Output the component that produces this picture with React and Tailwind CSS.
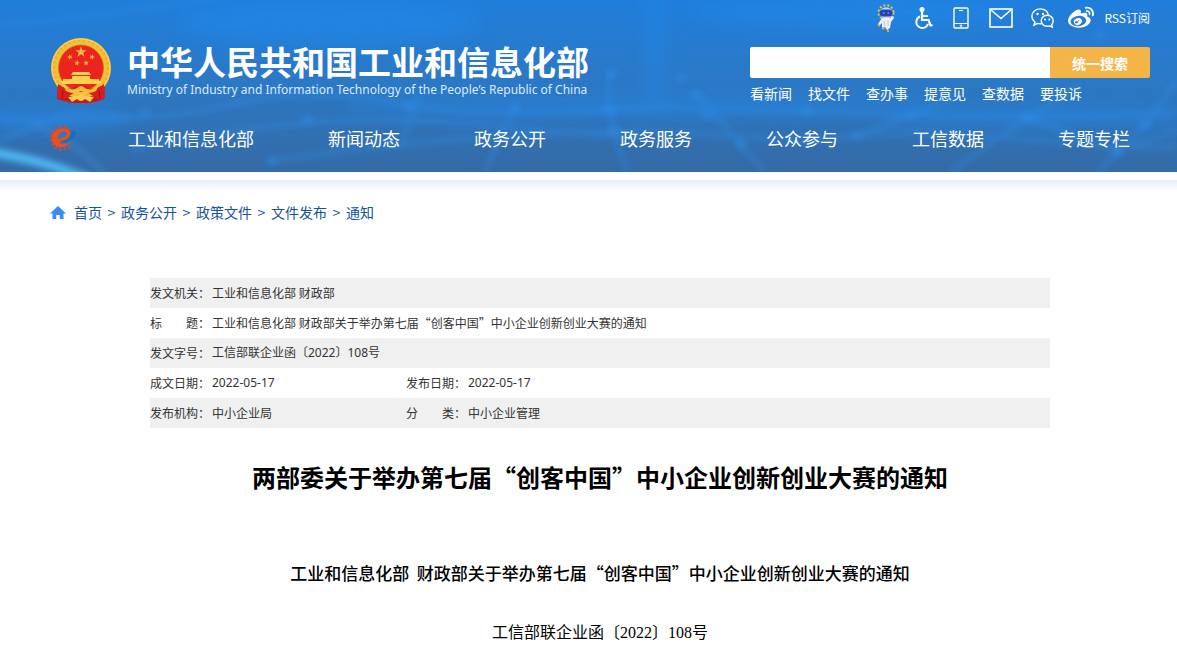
import React, { useState } from 'react';
import { FaWeibo } from 'react-icons/fa';

const quickLinks = ['看新闻', '找文件', '查办事', '提意见', '查数据', '要投诉'];

const navItems = [
  '工业和信息化部',
  '新闻动态',
  '政务公开',
  '政务服务',
  '公众参与',
  '工信数据',
  '专题专栏'
];

const crumbs = ['首页', '政务公开', '政策文件', '文件发布', '通知'];

const glowDots = [
  [145, 112], [308, 119], [409, 106], [515, 107], [612, 73], [609, 109],
  [681, 77], [695, 95], [707, 114], [741, 143], [857, 135], [807, 110],
  [911, 114], [1027, 117], [1118, 151], [1145, 124], [1100, 35], [614, 130], [272, 160]
];

const star = '0,-10 2.4,-3.1 9.5,-3.1 3.8,1.2 5.9,8.1 0,3.9 -5.9,8.1 -3.8,1.2 -9.5,-3.1 -2.4,-3.1';

const smallStars = [
  [20, 19, -20],
  [27, 25, 10],
  [36, 25, -10],
  [42, 19, 20]
];

const HeaderBackdrop = () => (
  <svg
    className="absolute inset-0 h-full w-full"
    viewBox="0 0 1177 171"
    preserveAspectRatio="none"
    aria-hidden="true"
  >
    <defs>
      <filter id="soft" x="-20%" y="-20%" width="140%" height="140%">
        <feGaussianBlur stdDeviation="3" />
      </filter>
      <filter id="wide" x="-50%" y="-50%" width="200%" height="200%">
        <feGaussianBlur stdDeviation="9" />
      </filter>
    </defs>
    <g filter="url(#wide)" fill="#2388ea" opacity="0.6">
      <ellipse cx="330" cy="22" rx="150" ry="22" />
      <ellipse cx="860" cy="12" rx="170" ry="14" />
      <rect x="648" y="0" width="14" height="110" />
      <ellipse cx="640" cy="106" rx="300" ry="8" />
      <ellipse cx="1040" cy="116" rx="160" ry="8" />
      <ellipse cx="40" cy="118" rx="90" ry="10" />
    </g>
    <g filter="url(#soft)" fill="none" stroke="#2f8de6" strokeWidth="4" opacity="0.5">
      <path d="M0 118 C90 122 170 120 240 102 S360 96 420 106 S560 112 640 108 S800 112 910 114 S1100 116 1177 112" />
      <path d="M0 24 C80 20 160 6 230 -4" />
      <path d="M130 150 C230 128 300 118 400 120 S530 132 640 136" />
      <path d="M270 160 C400 142 520 132 620 130 S760 146 857 135 S1080 150 1177 146" />
      <path d="M609 70 C608 110 614 140 628 171" />
      <path d="M400 147 L420 90" />
      <path d="M515 107 L485 171" />
      <path d="M695 90 C720 120 745 150 765 171" />
      <path d="M857 135 L911 114 L960 95" />
      <path d="M950 171 L1027 117 L1080 85" />
      <path d="M1027 117 L1115 150 L1177 130" />
      <path d="M1098 171 L1145 124 L1177 80" />
      <path d="M0 140 L70 112 L140 116" />
    </g>
    <g filter="url(#soft)" fill="#2f90ee" opacity="0.5">
      {glowDots.map(([x, y], index) => (
        <ellipse key={index} cx={x} cy={y} rx="6" ry="4" />
      ))}
    </g>
    <g filter="url(#soft)" fill="none" strokeLinecap="round">
      <path d="M-10 151 C20 156 50 162 88 178" stroke="#4db8f4" strokeWidth="9" />
      <path d="M30 120 C60 136 90 152 110 180" stroke="#3a86cc" strokeWidth="4" opacity="0.7" />
    </g>
  </svg>
);

const NationalEmblem = () => (
  <svg className="h-[65px] w-[62px] shrink-0" viewBox="0 0 62 65" aria-hidden="true">
    <path d="M8 46 L7 61 L14 63 L22 65 H40 L48 63 L54 61 L55 46 Z" fill="#c8161d" />
    <ellipse cx="31" cy="30" rx="30" ry="30" fill="#f4bf35" />
    <ellipse cx="31" cy="30" rx="27" ry="27.5" fill="none" stroke="#e8ad2a" strokeWidth="2" strokeDasharray="2 3" />
    <ellipse cx="31" cy="30" rx="29" ry="29" fill="none" stroke="#fbd75f" strokeWidth="1" />
    <ellipse cx="31" cy="30" rx="22.5" ry="23" fill="#ec2420" stroke="#b97a16" strokeWidth="0.7" />
    <g fill="#f6bb35">
      <polygon points={star} transform="translate(31 14) scale(0.6)" />
      {smallStars.map(([x, y, turn]) => (
        <polygon key={x} points={star} transform={`translate(${x} ${y}) rotate(${turn}) scale(0.3)`} />
      ))}
    </g>
    <g fill="#fbd04a">
      <path d="M23 34 H39 L41 37 H21 Z" />
      <path d="M22 38 H40 V41 H49 V43 H13 V41 H22 Z" />
      <path d="M11 43 H51 L50 46 H12 Z" />
    </g>
    <path d="M8 46 Q16 52 24 50 Q31 44 38 50 Q46 52 54 46 L55 60 Q47 62 43 58 L37 54 H25 L19 58 Q15 62 7 60 Z" fill="#d71f1f" />
    <path d="M13 47 Q22 54 27 50 Q31 46 35 50 Q40 54 49 47 L46 53 Q38 57 31 53 Q24 57 16 53 Z" fill="#f5bf38" />
    <path d="M18 59 L27 58 Q31 54 35 58 L44 59 L40 64 L35 61 Q31 65 27 61 L22 64 Z" fill="#f8cc50" />
    <path d="M13 52 L12 60 M49 52 L50 60" stroke="#9f1013" strokeWidth="1" />
  </svg>
);

const GearLogo = () => (
  <svg className="-ml-0.5 h-[26px] w-[30px]" viewBox="0 0 30 26" aria-hidden="true">
    <path d="M22 4.500 A11.500 11.500 0 1 0 22 21.500" fill="none" stroke="#e2452a" strokeWidth="2.400" strokeDasharray="2.200 2.400" />
    <path
      d="M22.500 9 C22 3 15 2.500 11 4 C6 6 3.500 10 4 14 C4.500 19 8.500 22.500 13.500 22.300 C17.500 22 20.500 20 22.500 17 C18 19.500 13.500 19.500 10.800 17 C15 17 21 15 22.500 9 Z M18.800 8.500 C18 12 14 13.800 9.500 14.200 C9.500 10 13 6.500 16.500 6.500 C18 6.500 18.900 7.200 18.800 8.500 Z"
      fill="#f04e16"
      fillRule="evenodd"
    />
    <path d="M11 15.800 C17 16.500 22.500 13.500 23.500 8 L22 9 L26.500 5 L28.500 9.500 L27 9 C26 15 18 19 11 15.800 Z" fill="#0b72bf" />
  </svg>
);

const RobotIcon = () => (
  <svg className="h-[28px] w-[18px]" viewBox="0 0 18 28" aria-hidden="true">
    <ellipse cx="9" cy="8.5" rx="7.5" ry="7.3" fill="none" stroke="#f3c62d" strokeWidth="2" strokeDasharray="2 2" />
    <ellipse cx="9" cy="9" rx="6.5" ry="5.800" fill="#cbd6f2" />
    <rect x="2.500" y="5.500" width="13" height="7" rx="3.500" fill="#2a3fb4" />
    <path d="M6 9 H7.500 M10.500 9 H12" stroke="#5fa8ff" strokeWidth="1.400" />
    <path d="M5 14 H13 L16 12 L17 14 L14 18 L13 24 L10 26 L8 23 L5 24 L5 19 L2 22 L1 20 Z" fill="#eef2fb" />
    <path d="M7 17 L8 22 M11 16 L11 22" stroke="#bcc8e2" strokeWidth="1" />
    <path d="M1 20 L2.500 22.500 M5 24.500 H7.500 M10 27 H12" stroke="#f0a42b" strokeWidth="1.800" />
  </svg>
);

const WheelchairIcon = () => (
  <svg className="h-[22px] w-[18px]" viewBox="0 0 18 22" fill="none" stroke="white" aria-hidden="true">
    <circle cx="7" cy="2.500" r="2.500" fill="white" stroke="none" />
    <path d="M7 5 V13 H13.500 L15.500 18.500 L17.500 18" strokeWidth="2.200" />
    <path d="M7 9 H13" strokeWidth="1.800" />
    <path d="M5 9.500 A6 6 0 1 0 13 17" strokeWidth="1.900" />
  </svg>
);

const PhoneIcon = () => (
  <svg className="h-[22px] w-4" viewBox="0 0 16 22" fill="none" stroke="white" aria-hidden="true">
    <rect x="1" y="1" width="14" height="20" rx="1" strokeWidth="1.400" />
    <path d="M1 16.500 H15 M6 3.500 H10" strokeWidth="1.200" />
    <circle cx="8" cy="18.700" r="0.800" strokeWidth="1" />
  </svg>
);

const MailIcon = () => (
  <svg className="h-5 w-6" viewBox="0 0 24 20" fill="none" stroke="white" strokeWidth="1.600" aria-hidden="true">
    <rect x="1" y="1" width="22" height="18" />
    <path d="M1.500 1.500 L12 10.500 L22.500 1.500" />
  </svg>
);

const WechatIcon = () => (
  <svg className="h-5 w-[23px]" viewBox="0 0 23 20" fill="none" stroke="white" strokeWidth="1.400" aria-hidden="true">
    <path d="M17.500 7.300 C17 3.500 13.500 0.900 9.300 0.900 C4.600 0.900 0.900 4.200 0.900 8.300 C0.900 10.700 2.100 12.700 4 14 L3 17.200 L6.500 15.400 C7.800 15.800 9 15.800 10.300 15.700" />
    <path d="M16.200 7.300 C12.900 7.300 10.200 9.700 10.200 12.800 C10.200 15.900 12.900 18.300 16.200 18.300 C17.100 18.300 17.800 18.200 18.600 17.900 L21.300 19.200 L20.700 16.700 C21.600 15.700 22.200 14.400 22.200 12.800 C22.200 9.700 19.500 7.300 16.200 7.300 Z" />
    <g fill="white" stroke="none">
      <circle cx="6.500" cy="6" r="1.200" />
      <circle cx="12" cy="6" r="1.200" />
      <circle cx="14" cy="11.500" r="1" />
      <circle cx="18.300" cy="11.500" r="1" />
    </g>
  </svg>
);

const HomeIcon = () => (
  <svg className="h-[13px] w-4" viewBox="0 0 16 13" fill="#3b8bf5" aria-hidden="true">
    <path d="M8 0 L16 7.500 H13.500 V13 H9.800 V9 H6.200 V13 H2.500 V7.500 H0 Z" />
  </svg>
);

const Header = () => {
  const [keyword, setKeyword] = useState('');

  return (
    <header className="relative overflow-hidden bg-linear-to-b from-[#1f7edb] via-[#2c78c4] to-[#346aa5]">
      <HeaderBackdrop />
      <div className="relative pl-[50px] pr-[27px] text-white">
        <div className="flex h-[108px] items-start justify-between">
          <div className="flex items-start gap-[15px] pt-[38px]">
            <NationalEmblem />
            <div>
              <h1 className="whitespace-nowrap text-[33px] font-bold leading-[46px]">中华人民共和国工业和信息化部</h1>
              <p lang="en" className="whitespace-nowrap font-['Noto_Sans',sans-serif] text-xs leading-3 text-blue-100">
                Ministry of Industry and Information Technology of the People’s Republic of China
              </p>
            </div>
          </div>

          <div className="w-[400px] pt-1">
            <div className="flex h-7 items-center justify-end">
              <a href="#robot" aria-label="智能问答" className="mr-5"><RobotIcon /></a>
              <a href="#accessible" aria-label="无障碍" className="mr-5"><WheelchairIcon /></a>
              <a href="#mobile" aria-label="手机版" className="mr-5"><PhoneIcon /></a>
              <a href="#mail" aria-label="邮箱" className="mr-[18px]"><MailIcon /></a>
              <a href="#wechat" aria-label="微信" className="mr-[14px]"><WechatIcon /></a>
              <a href="#weibo" aria-label="微博" className="mr-[10px]"><FaWeibo size={26} /></a>
              <a href="#rss" className="text-xs">RSS订阅</a>
            </div>
            <form className="mt-[15px] flex h-[31px]" onSubmit={(e) => e.preventDefault()}>
              <input
                type="text"
                aria-label="搜索"
                value={keyword}
                onChange={(e) => setKeyword(e.target.value)}
                className="min-w-0 flex-1 rounded-l-xs bg-white px-2 text-sm text-gray-800 outline-none"
              />
              <button type="submit" className="w-[100px] rounded-r-xs bg-[#f3b548] text-sm font-bold">
                统一搜索
              </button>
            </form>
            <div className="mt-1 flex gap-4 text-sm leading-[22px]">
              {quickLinks.map((link) => (
                <a key={link} href="#search">{link}</a>
              ))}
            </div>
          </div>
        </div>

        <nav className="flex h-16 items-center pb-1">
          <a href="#home" aria-label="首页" className="w-[78px]"><GearLogo /></a>
          <div className="flex flex-1 justify-between pr-5 text-lg">
            {navItems.map((item) => (
              <a key={item} href="#nav" className="whitespace-nowrap">{item}</a>
            ))}
          </div>
        </nav>
      </div>
    </header>
  );
};

const Breadcrumb = () => (
  <nav aria-label="面包屑" className="flex items-center pl-[50px] text-sm leading-6 text-[#17539c]">
    <HomeIcon />
    <div className="ml-2 flex">
      {crumbs.map((crumb, index) => (
        <React.Fragment key={crumb}>
          {index > 0 && <span className="w-[19px] text-center">&gt;</span>}
          <a href="#crumb">{crumb}</a>
        </React.Fragment>
      ))}
    </div>
  </nav>
);

const InfoTable = () => (
  <table className="w-full table-fixed text-left text-xs text-[#333]">
    <colgroup>
      <col className="w-[62px]" />
      <col className="w-[194px]" />
      <col className="w-[62px]" />
      <col />
    </colgroup>
    <tbody>
      <tr className="h-[30px] bg-[#f0f0f0]">
        <th scope="row" className="whitespace-nowrap font-normal">发文机关：</th>
        <td colSpan={3}>工业和信息化部 财政部</td>
      </tr>
      <tr className="h-[30px]">
        <th scope="row" className="whitespace-nowrap font-normal">标　　题：</th>
        <td colSpan={3}>工业和信息化部 财政部关于举办第七届“创客中国”中小企业创新创业大赛的通知</td>
      </tr>
      <tr className="h-[30px] bg-[#f0f0f0]">
        <th scope="row" className="whitespace-nowrap font-normal">发文字号：</th>
        <td colSpan={3} className="font-['Noto_Sans','Noto_Sans_CJK_SC',sans-serif]">工信部联企业函〔2022〕108号</td>
      </tr>
      <tr className="h-[30px]">
        <th scope="row" className="whitespace-nowrap font-normal">成文日期：</th>
        <td className="font-['Noto_Sans','Noto_Sans_CJK_SC',sans-serif]">2022-05-17</td>
        <th scope="row" className="whitespace-nowrap font-normal">发布日期：</th>
        <td className="font-['Noto_Sans','Noto_Sans_CJK_SC',sans-serif]">2022-05-17</td>
      </tr>
      <tr className="h-[30px] bg-[#f0f0f0]">
        <th scope="row" className="whitespace-nowrap font-normal">发布机构：</th>
        <td>中小企业局</td>
        <th scope="row" className="whitespace-nowrap font-normal">分　　类：</th>
        <td>中小企业管理</td>
      </tr>
    </tbody>
  </table>
);

const App = () => {
  return (
    <div lang="zh-CN" className="bg-white font-['Noto_Sans_CJK_SC','Noto_Sans',sans-serif]">
      <Header />
      <div className="mt-2 h-3 bg-linear-to-b from-[#e8eff6] to-white" />
      <div className="mt-2">
        <Breadcrumb />
      </div>
      <main className="mt-[54px] pl-[150px] pr-[127px]">
        <InfoTable />
        <h2 className="mt-[31px] text-center text-2xl font-bold leading-9 text-black">
          两部委关于举办第七届“创客中国”中小企业创新创业大赛的通知
        </h2>
        <p className="mt-[62px] text-center text-[17px] font-medium leading-8 text-black">
          工业和信息化部&nbsp; 财政部关于举办第七届“创客中国”中小企业创新创业大赛的通知
        </p>
        <p className="mt-7 text-center font-['Liberation_Serif','Noto_Sans_CJK_SC',serif] text-base leading-8 text-black">
          工信部联企业函〔2022〕108号
        </p>
      </main>
    </div>
  );
};

export default App;
